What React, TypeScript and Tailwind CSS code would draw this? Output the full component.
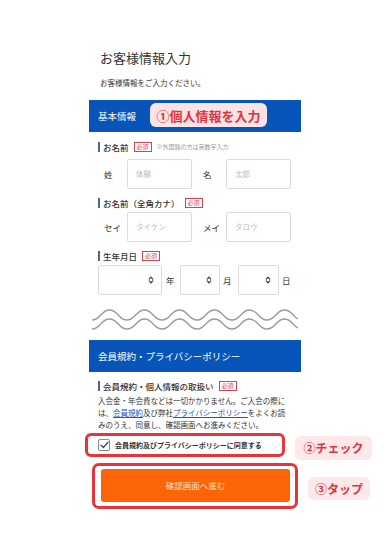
import React from "react";

const font = { fontFamily: '"Noto Sans CJK JP", "Noto Sans", sans-serif' };

function Req() {
  return (
    <span className="ml-[5px] inline-flex items-center justify-center h-[10px] px-[2px] border border-[#d9414a] text-[#d9414a] text-[6px] leading-none">
      必須
    </span>
  );
}

function Label({ children, extra }: { children: React.ReactNode; extra?: React.ReactNode }) {
  return (
    <div className="flex items-center h-[12px] pl-[9px]">
      <span className="w-[2px] h-[10px] bg-[#5a6475] mr-[3px]" />
      <span className="text-[8.5px] text-[#333] font-medium leading-none">{children}</span>
      <Req />
      {extra}
    </div>
  );
}

function Input({ ph }: { ph: string }) {
  return (
    <div className="w-[65px] h-[30px] border border-[#dcdcdc] rounded-[2px] flex items-center pl-[8px] text-[7.5px] text-[#bdbdbd]">
      {ph}
    </div>
  );
}

function Arrow() {
  return (
    <svg width="6" height="8" viewBox="0 0 6 8" className="shrink-0">
      <path d="M1.2 3.2 L3 1.2 L4.8 3.2" fill="none" stroke="#333" strokeWidth="1.1" strokeLinecap="round" strokeLinejoin="round" />
      <path d="M1.2 4.8 L3 6.8 L4.8 4.8" fill="none" stroke="#333" strokeWidth="1.1" strokeLinecap="round" strokeLinejoin="round" />
    </svg>
  );
}

function Select({ w }: { w: string }) {
  return (
    <div className={`${w} h-[30px] border border-[#dcdcdc] rounded-[2px] flex items-center justify-end pr-[7px]`}>
      <Arrow />
    </div>
  );
}

function Wave() {
  const period = 35;
  const amp = 5;
  const build = (y0: number) => {
    let d = `M0 ${y0 + amp}`;
    for (let i = 0; i < 6; i++) {
      const x = i * period;
      d += ` C${x + period * 0.25} ${y0 + amp} ${x + period * 0.25} ${y0 - amp} ${x + period * 0.5} ${y0 - amp}`;
      d += ` C${x + period * 0.75} ${y0 - amp} ${x + period * 0.75} ${y0 + amp} ${x + period} ${y0 + amp}`;
    }
    return d;
  };
  return (
    <svg width="206" height="24" viewBox="0 0 206 24" className="ml-[3px]">
      <path d={build(6)} fill="none" stroke="#9a9a9a" strokeWidth="1.3" />
      <path d={build(15)} fill="none" stroke="#9a9a9a" strokeWidth="1.3" />
    </svg>
  );
}

export default function App() {
  return (
    <div className="relative w-[390px] h-[550px] bg-white overflow-hidden" style={font}>
      <div className="w-[212px] mx-auto pt-[49px]">
        <div className="pl-[11px] text-[13px] leading-[18px] text-[#333]">お客様情報入力</div>
        <div className="pl-[11px] mt-[11px] text-[7.5px] leading-[10px] text-[#333]">お客様情報をご入力ください。</div>

        <div className="mt-[12px] h-[32px] bg-[#0755b9] flex items-center pl-[9px] text-[9.5px] text-white">
          基本情報
        </div>

        <div className="mt-[9px]">
          <Label extra={<span className="ml-[5px] text-[6px] text-[#999] leading-none">※外国籍の方は英数字入力</span>}>お名前</Label>
        </div>
        <div className="mt-[6px] flex items-center pl-[15px]">
          <span className="w-[23px] text-[8.5px] text-[#333]">姓</span>
          <Input ph="体験" />
          <span className="ml-[11px] w-[23px] text-[8.5px] text-[#333]">名</span>
          <Input ph="太郎" />
        </div>

        <div className="mt-[8px]">
          <Label>お名前（全角カナ）</Label>
        </div>
        <div className="mt-[3px] flex items-center pl-[15px]">
          <span className="w-[23px] text-[8.5px] text-[#333]">セイ</span>
          <Input ph="タイケン" />
          <span className="ml-[11px] w-[23px] text-[8.5px] text-[#333]">メイ</span>
          <Input ph="タロウ" />
        </div>

        <div className="mt-[8px]">
          <Label>生年月日</Label>
        </div>
        <div className="mt-[3px] flex items-center pl-[9px] text-[8.5px] text-[#333]">
          <Select w="w-[64px]" />
          <span className="ml-[4px] w-[14px]">年</span>
          <Select w="w-[40px]" />
          <span className="ml-[3px] w-[15px]">月</span>
          <Select w="w-[41px]" />
          <span className="ml-[3px]">日</span>
        </div>

        <div className="mt-[14px]">
          <Wave />
        </div>

        <div className="mt-[7px] h-[32px] bg-[#0755b9] flex items-center pl-[9px] text-[9.5px] text-white">
          会員規約・プライバシーポリシー
        </div>

        <div className="mt-[8px]">
          <Label>会員規約・個人情報の取扱い</Label>
        </div>
        <div className="mt-[3px] pl-[9px] pr-[12px] text-[7.5px] leading-[12px] text-[#333]">
          入会金・年会費などは一切かかりません。ご入会の際には、<span className="text-[#2a4fc0] underline">会員規約</span>及び弊社<span className="text-[#2a4fc0] underline">プライバシーポリシー</span>をよくお読みのうえ、同意し、確認画面へお進みください。
        </div>

        <div className="mt-[2px] ml-[-4px] w-[200px] h-[24px] border-[3px] border-[#e8333b] rounded-[6px] flex items-center pl-[10px]">
          <span className="w-[12px] h-[12px] border border-[#8a8a8a] rounded-[2px] flex items-center justify-center bg-white">
            <svg width="9" height="8" viewBox="0 0 9 8">
              <path d="M1 4.2 L3.4 6.5 L8 1.2" fill="none" stroke="#2d4f8a" strokeWidth="1.3" strokeLinecap="round" strokeLinejoin="round" />
            </svg>
          </span>
          <span className="ml-[5px] text-[7px] font-bold text-[#333] leading-none">会員規約及びプライバシーポリシーに同意する</span>
        </div>

        <div className="mt-[6px] ml-[3px] w-[206px] h-[46px] border-[3px] border-[#e8333b] rounded-[7px] pl-[6px] pr-[5px] pt-[3px] pb-[4px]">
          <div className="h-full bg-[#fb6508] rounded-[3px] flex items-center justify-center text-[8.5px] text-[#ffe0cc]">
            確認画面へ進む
          </div>
        </div>
      </div>

      <div className="absolute left-[150px] top-[103px] w-[117px] h-[24px] rounded-[6px] bg-[#fde3e5] flex items-center justify-center text-[13px] font-bold text-[#e5303c] leading-none">
        ①個人情報を入力
      </div>
      <div className="absolute left-[295px] top-[436px] w-[77px] h-[24px] rounded-[6px] bg-[#fde9ea] flex items-center justify-center text-[12px] font-bold text-[#e5303c] leading-none">
        ②チェック
      </div>
      <div className="absolute left-[308px] top-[477px] w-[62px] h-[23px] rounded-[6px] bg-[#fde9ea] flex items-center justify-center text-[12px] font-bold text-[#e5303c] leading-none">
        ③タップ
      </div>
    </div>
  );
}
